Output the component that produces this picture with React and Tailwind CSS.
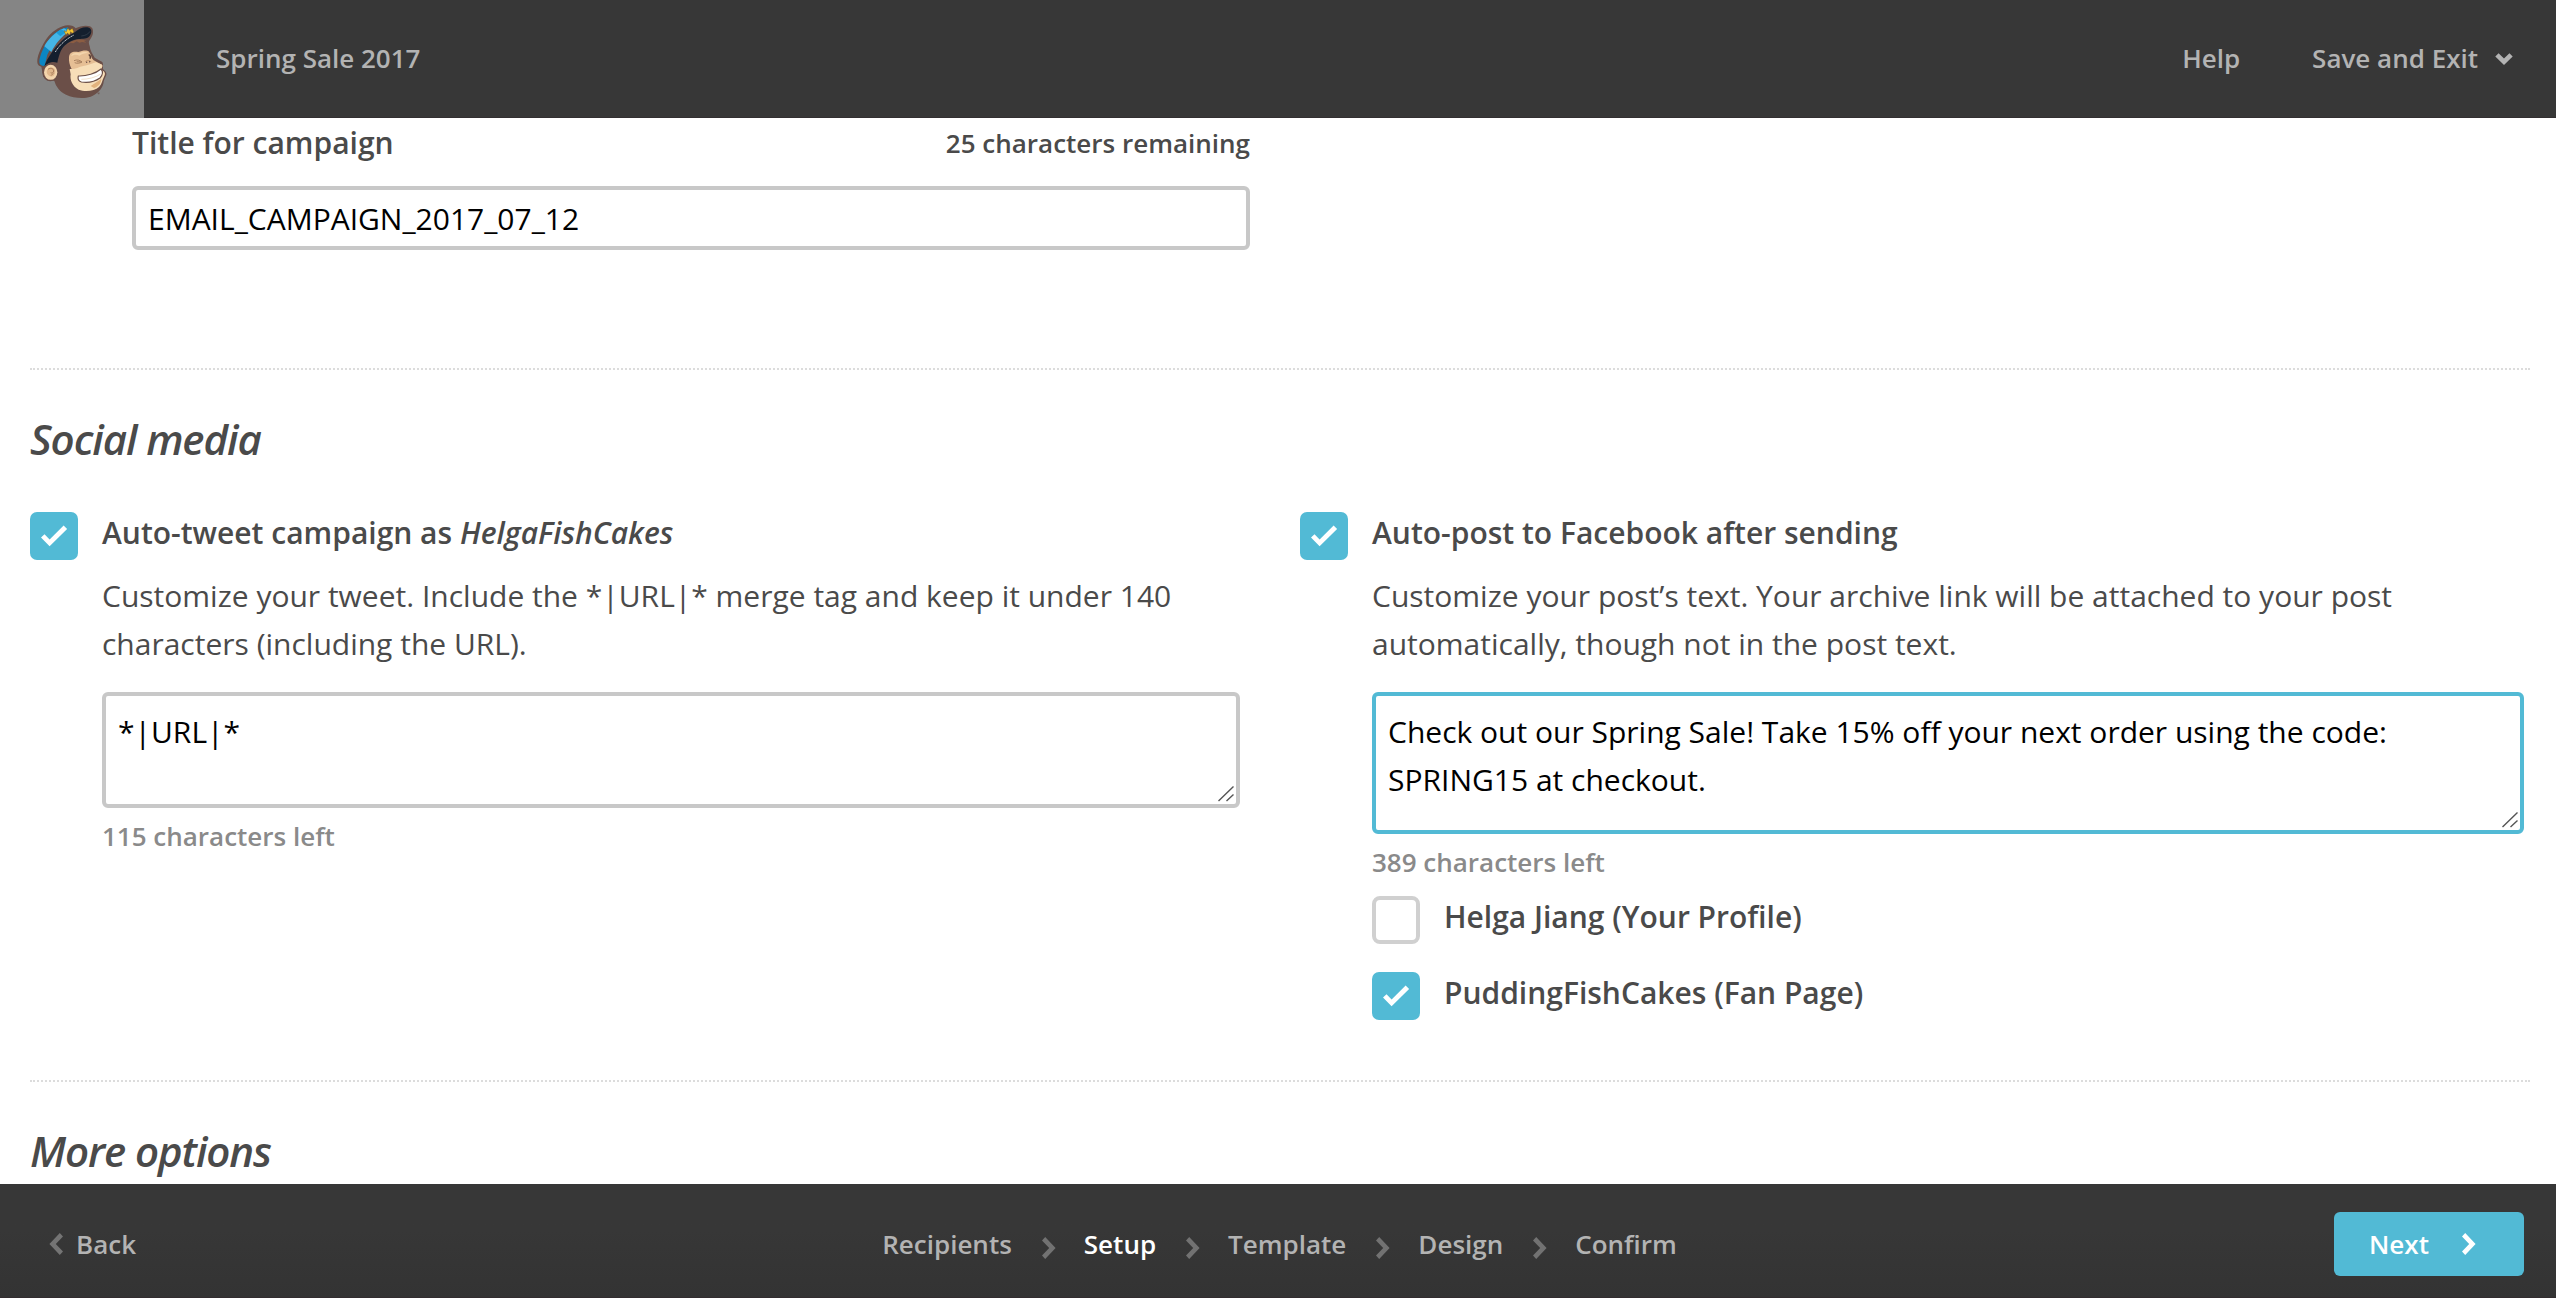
import React from "react";

function Mascot() {
  return (
    <svg width="110" height="100" viewBox="0 0 330 300" aria-hidden="true">
      {/* head and cap silhouette */}
      <path
        d="M52 150C53 134 66 104 84 80C102 60 124 47 143 46C154 45 162 49 167 55C180 48 198 45 210 49C222 55 222 72 212 86C205 94 206 98 209 108C210 120 217 132 224 143L247 156C250 162 249 168 249 177C255 183 261 188 259 195C255 205 251 211 250 221C246 238 230 253 212 260C190 267 160 264 138 254C120 246 108 230 103 213L70 200L64 170C54 168 51 160 52 150Z"
        fill="#6b4f48"
      />
      {/* cap crown */}
      <path d="M58 156C58 138 72 104 94 80C108 65 124 55 143 52L150 62C124 78 96 104 82 134L74 168C64 168 58 164 58 156Z" fill="#0b86c4" />
      <path d="M73 109C84 88 106 66 132 55L148 64C124 80 107 101 94 126Z" fill="#45b5e6" />
      <path d="M109 68L124 58L137 67L121 79Z" fill="#1c9cd6" />
      {/* cap band and visor */}
      <path d="M73 168C82 144 104 112 128 90C142 77 154 73 164 67C178 54 194 49 207 53C216 57 216 68 209 78C202 87 188 86 176 87C160 88 146 96 135 106C120 120 117 138 112 158C104 156 96 154 87 159Z" fill="#141f2e" />
      <path d="M106 126C117 107 136 88 162 75" fill="none" stroke="#e8edf0" strokeWidth="2.6" strokeDasharray="4 1.5" />
      <path d="M184 78C196 77 206 72 210 64" fill="none" stroke="#3b4653" strokeWidth="2" />
      {/* cap badge */}
      <path d="M132 62L139 65L143 54L149 61L157 55L162 67L156 70L152 65L149 75L142 69L138 76Z" fill="#f6c62f" stroke="#3e3620" strokeWidth="1" />
      {/* hair */}
      <path d="M140 105C154 90 178 84 201 92L191 92L199 98L186 96L178 98L170 94L160 100L152 98Z" fill="#8c5d42" />
      {/* face */}
      <path d="M147 142C148 126 160 123 175 126C187 122 200 119 207 125C214 134 213 144 221 151L246 164C250 170 244 176 236 181L177 196C158 190 145 165 147 142Z" fill="#e6bf95" />
      <path d="M153 139C158 128 169 127 178 130C188 125 199 124 204 129C194 129 186 132 178 137C169 132 160 134 153 139Z" fill="#f3d5ad" />
      <path d="M149 177C164 179 176 171 190 168C205 167 216 160 228 157L246 164C249 171 240 176 246 181C254 184 258 191 252 200C246 211 246 222 237 231C224 243 196 247 176 239C157 230 149 209 152 193Z" fill="#f7deb8" />
      <path d="M212 228L244 207C243 219 236 230 222 234Z" fill="#e2b27d" />
      {/* smile */}
      <path d="M175 198C199 199 228 190 243 177C249 184 248 195 240 204C226 214 203 219 184 216C175 213 173 205 175 198Z" fill="#fff" stroke="#6b4f48" strokeWidth="3.5" strokeLinejoin="round" />
      <path d="M184 208C204 208 228 202 242 192" fill="none" stroke="#e9cfae" strokeWidth="2" />
      {/* eyes and nose */}
      <path d="M162 152C170 148 180 150 186 156C179 160 171 161 164 158M170 155L185 156" fill="none" stroke="#9c7454" strokeWidth="2.4" />
      <path d="M206 134C211 136 212 141 210 146" fill="none" stroke="#5b4037" strokeWidth="4.5" />
      <path d="M196 156C199 150 210 149 213 156" fill="none" stroke="#b88a62" strokeWidth="2" />
      <circle cx="200" cy="157" r="2.2" fill="#6b4f48" />
      <circle cx="209" cy="155" r="2.2" fill="#6b4f48" />
      {/* ear */}
      <ellipse cx="91" cy="187" rx="24" ry="27" fill="#6b4f48" />
      <ellipse cx="92" cy="187" rx="20" ry="22.5" fill="#f3d5ad" />
      <path d="M80 186C80 173 94 169 102 175C109 182 106 194 99 199C90 201 81 196 80 186Z" fill="#e0b78c" />
      <path d="M84 178C91 172 101 175 101 183C101 188 96 191 92 188M100 190L93 197" fill="none" stroke="#a97d5a" strokeWidth="3" />
      <path d="M232 249H239M236 249V253" stroke="#6b4f48" strokeWidth="2" />
    </svg>
  );
}

function ChevronRight({ className }) {
  return (
    <svg width="14" height="22" viewBox="0 0 14 22" fill="currentColor" className={className} aria-hidden="true">
      <path d="M0 3.4L3.2 0L13.6 11L3.2 22L0 18.6L7.2 11Z" />
    </svg>
  );
}

function Checkbox({ checked }) {
  if (!checked) {
    return <span className="mt-1 size-12 shrink-0 rounded-[8px] border-4 border-[#d0d0d0] bg-white" />;
  }
  return (
    <span className="mt-1 size-12 shrink-0 rounded-[7px] bg-[#52bad5] text-white">
      <svg width="48" height="48" viewBox="0 0 48 48" fill="currentColor" aria-hidden="true">
        <path d="M11 25.6L14.5 22.2L19.6 27.4L33.6 13.6L37.1 17L19.6 34.2Z" />
      </svg>
    </span>
  );
}

function MessageBox({ value, focused, className }) {
  return (
    <div className="relative mt-6">
      <textarea
        readOnly
        value={value}
        className={
          "block w-full resize-none overflow-hidden rounded-[6px] border-4 p-3 text-[30px] leading-[48px] text-black outline-none " +
          (focused ? "border-[#52bad5] " : "border-[#c8c8c8] ") +
          className
        }
      />
      <svg width="16" height="16" viewBox="0 0 16 16" className="absolute right-1.5 bottom-1.5" fill="none" stroke="#555" strokeWidth="1.4" aria-hidden="true">
        <path d="M0.5 15L15.5 0.5M8.5 15L15.5 8.5" />
      </svg>
    </div>
  );
}

function Option({ checked, children }) {
  return (
    <div className="flex h-12 items-start gap-6">
      <Checkbox checked={checked} />
      <div className="pt-px text-[30px] leading-[48px] font-semibold">{children}</div>
    </div>
  );
}

const heading = "text-[42px] leading-[60px] font-semibold tracking-[-1.1px] italic";
const steps = ["Recipients", "Setup", "Template", "Design", "Confirm"];

export default function App() {
  return (
    <div className="flex h-[1298px] w-[2556px] flex-col overflow-hidden bg-white font-['Open_Sans',sans-serif] text-[#4a4a4a]">
      <header className="flex h-[118px] shrink-0 border-b border-[#332f31] bg-[#373737] text-[26px] font-semibold text-[#b3b3b3]">
        <div className="h-[118px] w-36 bg-[#858585] pt-2.5 pl-5">
          <Mascot />
        </div>
        <div className="flex h-[116px] flex-1 items-center pr-[43px] pl-[72px]">
          <span>Spring Sale 2017</span>
          <span className="ml-auto">Help</span>
          <span className="ml-[72px]">Save and Exit</span>
          <svg width="18" height="12" viewBox="0 0 18 12" fill="currentColor" className="mt-0.5 ml-[17px]" aria-hidden="true">
            <path d="M0.3 3.4L3.6 0.2L9 5.4L14.4 0.2L17.7 3.4L9 12Z" />
          </svg>
        </div>
      </header>

      <main className="flex min-h-0 flex-1 flex-col overflow-hidden pr-[26px] pl-[30px]">
        <section className="ml-[102px] w-[1118px]">
          <div className="flex items-center justify-between pt-px font-semibold">
            <label className="text-[30px] leading-[48px]">Title for campaign</label>
            <span className="text-[26px] leading-[46px]">25 characters remaining</span>
          </div>
          <div className="mt-[19px] flex h-16 items-center rounded-[6px] border-4 border-[#c8c8c8] px-3 text-[30px] text-black">
            EMAIL_CAMPAIGN_2017_07_12
          </div>
        </section>

        <section className="mt-[118px] border-t-2 border-dotted border-[#dcdcdc] pt-[39px] pb-16">
          <h2 className={heading}>Social media</h2>
          <div className="mt-[39px] flex items-start">
            <div className="w-[1210px]">
              <Option checked>
                Auto-tweet campaign as <em>HelgaFishCakes</em>
              </Option>
              <div className="mt-4 ml-[72px]">
                <p className="text-[30px] leading-[48px]">
                  Customize your tweet. Include the *|URL|* merge tag and keep it under 140 characters (including the URL).
                </p>
                <MessageBox value="*|URL|*" className="h-[116px]" />
                <p className="mt-2 text-[26px] leading-10 font-semibold text-[#8a8a8a]">115 characters left</p>
              </div>
            </div>
            <div className="ml-[60px] w-[1224px]">
              <Option checked>Auto-post to Facebook after sending</Option>
              <div className="mt-4 ml-[72px]">
                <p className="text-[30px] leading-[48px]">
                  Customize your post’s text. Your archive link will be attached to your post automatically, though not in the post text.
                </p>
                <MessageBox
                  focused
                  value="Check out our Spring Sale! Take 15% off your next order using the code: SPRING15 at checkout."
                  className="h-[142px]"
                />
                <p className="mt-2 text-[26px] leading-10 font-semibold text-[#8a8a8a]">389 characters left</p>
                <div className="mt-2.5 flex flex-col gap-7">
                  <Option>Helga Jiang (Your Profile)</Option>
                  <Option checked>PuddingFishCakes (Fan Page)</Option>
                </div>
              </div>
            </div>
          </div>
        </section>

        <section className="border-t-2 border-dotted border-[#dcdcdc] pt-[39px]">
          <h2 className={heading}>More options</h2>
        </section>
      </main>

      <footer className="grid h-[114px] shrink-0 grid-cols-[1fr_auto_1fr] items-start border-b border-[#322c2f] bg-linear-to-b from-[#373737] from-40% to-[#333333] pt-7 pr-8 pl-[35px] text-[26px] font-semibold text-[#b3b3b3]">
        <div className="flex h-16 items-center gap-[13px] pl-3.5">
          <ChevronRight className="rotate-180 text-[#747474]" />
          <span>Back</span>
        </div>
        <nav className="flex h-16 items-center">
          {steps.map((step, i) => (
            <React.Fragment key={step}>
              {i > 0 && <ChevronRight className="mt-2 mr-[28px] ml-[30px] text-[#727272]" />}
              <span className={step === "Setup" ? "text-white" : ""}>{step}</span>
            </React.Fragment>
          ))}
        </nav>
        <div className="flex h-16 w-[190px] items-center justify-self-end rounded-[6px] bg-[#52bad5] pl-[35px] text-white">
          <span>Next</span>
          <ChevronRight className="ml-[33px]" />
        </div>
      </footer>
    </div>
  );
}
